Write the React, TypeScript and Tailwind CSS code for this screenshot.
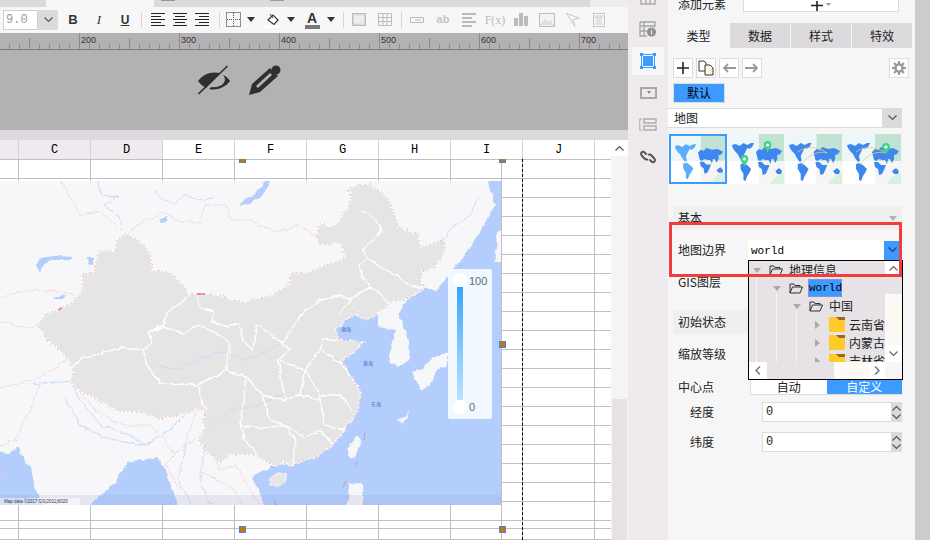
import React from "react";

const CJK = '[font-family:"Noto_Sans_CJK_SC",sans-serif]';
const MONO = '[font-family:"Liberation_Mono",monospace]';

const Caret = () => (
  <svg width="8" height="5" viewBox="0 0 8 5">
    <path d="M0 0H8L4 5Z" fill="#333" />
  </svg>
);

const Chevron = ({ color = "#555", up = false }: { color?: string; up?: boolean }) => (
  <svg width="9" height="6" viewBox="0 0 9 6">
    <path d={up ? "M.5 5.5L4.5 1.5L8.5 5.5" : "M.5 .5L4.5 4.5L8.5 .5"} fill="none" stroke={color} strokeWidth="1.2" />
  </svg>
);

const Sep = ({ className }: { className: string }) => <div className={`w-px h-4 bg-[#d8d8d8] ${className}`} />;

const AlignIcon = ({ kind }: { kind: "left" | "center" | "right" }) => {
  const short = kind === "left" ? "M0 3.5H10M0 9.5H10" : kind === "center" ? "M2 3.5H12M2 9.5H12" : "M4 3.5H14M4 9.5H14";
  return (
    <svg width="14" height="13" viewBox="0 0 14 13">
      <path d={`M0 .5H14M0 6.5H14M0 12.5H14 ${short}`} stroke="#222" strokeWidth="1" fill="none" />
    </svg>
  );
};

const Toolbar = () => (
  <div className="flex items-center h-[26px] bg-[#f7f7f7] pb-[1px]">
    <div className="flex ml-[3px] w-[55px] h-[20px] bg-[#dcdadd]">
      <div className={`w-[35px] bg-white border border-[#cfcfcf] text-[#999] text-[12px] leading-[18px] pl-[2px] ${MONO}`}>9.0</div>
      <div className="flex-1 flex items-center justify-center">
        <Chevron />
      </div>
    </div>
    <div className="ml-[2px] w-[26px] text-center text-[13px] font-bold text-[#333] [font-family:'Liberation_Sans',sans-serif]">B</div>
    <div className="w-[26px] text-center text-[13px] italic text-[#333] [font-family:'Liberation_Serif',serif]">I</div>
    <div className="w-[26px] text-center text-[12px] font-bold underline text-[#333] [font-family:'Liberation_Sans',sans-serif]">U</div>
    <Sep className="ml-[3px]" />
    <div className="ml-[5px] w-[22px] flex justify-center"><AlignIcon kind="left" /></div>
    <div className="w-[22px] flex justify-center"><AlignIcon kind="center" /></div>
    <div className="w-[22px] flex justify-center"><AlignIcon kind="right" /></div>
    <Sep className="ml-[6px]" />
    <div className="ml-[3px] w-[20px] flex justify-center">
      <svg width="15" height="15" viewBox="0 0 15 15">
        <rect x=".5" y=".5" width="14" height="14" fill="none" stroke="#222" strokeDasharray="1 1" />
        <path d="M7.5 1V14M1 7.5H14" stroke="#555" strokeDasharray="1 1" />
      </svg>
    </div>
    <div className="w-[16px] flex justify-center"><Caret /></div>
    <div className="ml-[2px] w-[24px] flex justify-center">
      <svg width="16" height="16" viewBox="0 0 16 16">
        <path d="M3 8L8 3L13 8L9 12.5Z" fill="#fff" stroke="#333" strokeWidth="1.2" />
        <path d="M5 2L8 6" stroke="#333" />
        <rect x="0" y="13" width="16" height="3" fill="#fff" />
      </svg>
    </div>
    <div className="w-[12px] flex justify-center"><Caret /></div>
    <div className="ml-[5px] w-[20px] flex flex-col items-center">
      <span className="text-[14px] leading-[14px] font-bold text-[#333] [font-family:'Liberation_Sans',sans-serif]">A</span>
      <div className="w-[15px] h-[4px] bg-[#777]" />
    </div>
    <div className="w-[18px] flex justify-center"><Caret /></div>
    <Sep className="ml-[3px]" />
    <div className="ml-[4px] w-[22px] flex justify-center">
      <svg width="14" height="13" viewBox="0 0 14 13">
        <rect x=".5" y=".5" width="13" height="12" fill="#d9d9d9" stroke="#bbb" />
        <rect x="2" y="2.5" width="10" height="8" fill="#eee" />
      </svg>
    </div>
    <div className="ml-[4px] w-[22px] flex justify-center">
      <svg width="14" height="13" viewBox="0 0 14 13">
        <path d="M.5 .5H13.5V12.5H.5ZM.5 4.5H13.5M.5 8.5H13.5M5 .5V12.5M9 .5V12.5" fill="none" stroke="#bbb" />
      </svg>
    </div>
    <Sep className="ml-[5px]" />
    <div className="ml-[2px] w-[26px] flex justify-center">
      <svg width="14" height="6" viewBox="0 0 14 6">
        <path d="M.5 .5H13.5V5.5H.5ZM5 3H11" fill="none" stroke="#bbb" />
      </svg>
    </div>
    <div className="w-[26px] text-center text-[11px] font-bold text-[#c4c4c4] [font-family:'Liberation_Sans',sans-serif]">ab</div>
    <div className="w-[26px] flex justify-center">
      <svg width="14" height="14" viewBox="0 0 14 14">
        <path d="M0 1H14M0 5H10M0 9H14M0 13H10" stroke="#bbb" strokeWidth="2" />
      </svg>
    </div>
    <div className="w-[26px] text-center text-[12px] text-[#bbb] [font-family:'Liberation_Serif',serif]">F(x)</div>
    <div className="w-[26px] flex justify-center">
      <svg width="14" height="13" viewBox="0 0 14 13">
        <path d="M0 5H4V13H0ZM5 0H9V13H5ZM10 3H14V13H10Z" fill="#bbb" />
      </svg>
    </div>
    <div className="w-[26px] flex justify-center">
      <svg width="16" height="14" viewBox="0 0 16 14">
        <rect x=".5" y=".5" width="15" height="13" fill="#f3f3f3" stroke="#bbb" />
        <path d="M1 12L6 6L9 9L11 7L15 12Z" fill="#ddd" />
      </svg>
    </div>
    <div className="w-[26px] flex justify-center">
      <svg width="14" height="14" viewBox="0 0 14 14">
        <path d="M.5 .5L13.5 5L7 6.5L9 13.5Z" fill="none" stroke="#c8c8c8" />
      </svg>
    </div>
    <div className="w-[26px] flex justify-center">
      <svg width="12" height="14" viewBox="0 0 12 14">
        <rect x=".5" y=".5" width="11" height="13" fill="#f9f9f9" stroke="#c4c4c4" />
        <path d="M2 3H10M2 5H10M2 11H10" stroke="#c4c4c4" />
        <rect x="3" y="6.5" width="6" height="3" fill="#ddd" />
      </svg>
    </div>
  </div>
);

const Ruler = () => {
  const ticks = Array.from({ length: 63 }, (_, i) => i * 10);
  return (
    <svg className="block" width="628" height="18" viewBox="0 0 628 18">
      <rect width="628" height="18" fill="#b3b1b3" />
      {ticks.map((x) => {
        const major = x % 100 === 80;
        const mid = x % 100 === 30;
        return (
          <path
            key={x}
            d={`M${x - 0.5} ${major ? 0 : mid ? 5 : 11}V16`}
            stroke="#8c8a8c"
          />
        );
      })}
      <path d="M0 16.5H628" stroke="#7d7b7d" strokeWidth="1" />
      {[
        [81, "200"],
        [181, "300"],
        [281, "400"],
        [381, "500"],
        [481, "600"],
        [581, "700"],
      ].map(([x, t]) => (
        <text key={t} x={x} y="10" fontSize="9" fill="#333" fontFamily="Liberation Sans, sans-serif">
          {t}
        </text>
      ))}
    </svg>
  );
};

const EyeOff = () => (
  <svg width="32" height="30" viewBox="0 0 32 30">
    <path d="M0 16C5 9 13 6 22 8L8 23C5 21 2 19 0 16Z" fill="#2f2f2f" />
    <path d="M25 10C28 11 30 13 32 16C28 22 19 26 11 24L13 22C20 23 26 20 27 15C27 13 26 11 25 10Z" fill="#2f2f2f" />
    <path d="M0.5 29L29.5 1" stroke="#2f2f2f" strokeWidth="1.6" />
    <path d="M3 29L31 2" stroke="#b3b1b3" strokeWidth="1" />
  </svg>
);

const Pencil = () => (
  <svg width="32" height="30" viewBox="0 0 32 30">
    <path d="M0 30L3 19L21 3L29 11L11 27Z" fill="#2f2f2f" />
    <path d="M7 21L21 8L23 10L9 23Z" fill="#b3b1b3" />
    <circle cx="27" cy="5" r="4.5" fill="#2f2f2f" />
  </svg>
);

const CHINA =
  "38,325 45,314 57,310 73,302 83,290 81,275 93,272 99,251 115,250 118,239 128,233 137,240 150,252 152,270 170,272 183,285 188,293 212,294 240,302 270,296 290,283 292,272 305,274 320,267 347,257 340,243 320,245 316,236 320,223 332,227 340,220 352,197 348,190 357,185 370,184 387,197 392,207 398,227 418,233 420,247 443,240 445,250 435,268 422,272 420,282 425,287 413,297 392,303 378,313 365,320 358,317 360,312 350,316 335,330 340,340 352,341 364,342 350,355 342,362 350,375 362,393 355,415 345,430 332,445 320,455 293,465 282,463 278,465 263,462 257,455 230,454 220,463 207,453 198,440 203,430 205,410 197,410 160,420 143,413 117,410 93,398 80,392 72,383 73,370 67,358 47,340";

const SEA_EAST =
  "485,170 495,205 483,227 467,253 452,270 435,292 428,288 420,287 407,300 392,303 378,313 365,320 358,317 360,312 350,316 335,330 340,340 352,341 364,342 350,355 342,362 350,375 362,393 355,415 345,430 332,445 320,455 293,465 282,463 278,465 268,468 252,477 258,490 267,515 515,515 515,170";
const SEA_BENGAL = "80,515 115,482 127,463 157,457 167,473 180,515";
const SEA_ARABIAN = "-10,452 10,453 18,447 23,457 30,468 33,483 46,515 -10,515";

const PROVINCES = [
  "190,295 167,313 163,325 148,332 153,343 143,350 120,348 83,358 72,368",
  "197,297 200,307 213,312 213,322 227,327 240,323 242,340 253,350",
  "148,332 163,327 183,333 197,325 217,333 230,343 230,358",
  "253,350 257,325 283,343 300,315 320,300 340,296 350,300",
  "363,210 375,220 382,230 363,250 368,258 358,265 363,277 370,287 350,300 340,313",
  "368,258 382,268 400,277 408,285 422,287",
  "370,287 383,295 388,307",
  "143,350 147,365 160,383 197,385 203,403 207,410",
  "197,385 213,377 227,370 247,377 262,395 285,400 300,395 320,400",
  "227,350 227,370",
  "247,377 243,405 240,425 263,428 285,425 295,440 293,465",
  "240,425 245,440 257,455",
  "262,395 270,420 285,425 305,438 320,430 332,445",
  "285,400 278,360 290,350 283,343",
  "278,360 305,370 320,350 323,340 340,340",
  "305,370 320,395 340,395 352,410",
  "320,350 340,362 350,375",
  "320,400 325,425 345,430",
  "320,395 320,400",
  "300,395 305,370",
];

const RIVERS = [
  "92,170 102,195 118,197 104,205 118,215 122,225",
  "155,191 160,198 175,205 183,195 198,200 215,198",
  "480,195 470,215 450,230 440,245",
  "33,385 70,380 80,400 100,425 130,435 145,445 170,430 185,415",
  "65,398 80,425 110,440 145,445",
  "198,515 178,480 186,445 195,440",
  "215,515 200,480 205,445",
  "153,365 180,370 200,358 225,352 245,360 280,345",
  "215,425 230,410 260,405 280,395",
];

const WEST_BORDERS = [
  "55,170 80,215 100,212 115,225 122,232",
  "128,233 145,220 165,212 180,222 200,222 205,205 225,205 232,220 250,220 275,232 300,225 316,236",
  "-10,300 30,290 60,292 78,295 83,290",
  "-10,320 30,328 38,325",
  "-10,390 35,380 60,365 67,358",
  "5,480 -10,450 15,440 30,410 40,385",
  "80,392 95,410 120,425 150,425 165,440 175,455",
  "197,410 185,445 165,465 180,490",
  "205,440 220,470 235,465 266,515",
  "200,470 235,490 245,515",
];

const MapCanvas = () => (
  <svg className="absolute left-0 top-[41px]" width="501" height="324" viewBox="0 181 501 324">
    <defs>
      <filter id="rough" x="-5%" y="-5%" width="110%" height="110%">
        <feTurbulence type="fractalNoise" baseFrequency="0.14" numOctaves="2" seed="4" />
        <feDisplacementMap in="SourceGraphic" scale="5" xChannelSelector="R" yChannelSelector="G" />
      </filter>
    </defs>
    <rect x="0" y="181" width="501" height="324" fill="#f7f6f8" />
    <g filter="url(#rough)">
      <polygon points={SEA_EAST} fill="#b3cefd" />
      <polygon points={SEA_BENGAL} fill="#b3cefd" />
      <polygon points={SEA_ARABIAN} fill="#b3cefd" />
      <polygon points="378,313 392,303 407,300 398,313 404,327 410,345 409,360 398,368 390,362 388,357 395,330 378,327" fill="#f7f6f8" />
      <polygon points="420,370 432,358 448,352 448,366 437,370 430,385 420,390 412,372" fill="#f7f6f8" />
      <polygon points="497,233 510,225 510,262 494,262 496,248" fill="#f7f6f8" />
      <polygon points="347,447 358,435 361,440 355,458 350,460" fill="#f7f6f8" />
      <polygon points="349,484 362,483 363,515 347,515" fill="#f7f6f8" />
      <polygon points="270,478 278,473 287,473 285,482 277,487 270,485" fill="#e6e6e6" stroke="#f7f6f8" />
      <polygon points="398,420 410,412 402,424" fill="#f7f6f8" />
      <polygon points="240,203 252,196 262,186 275,170 265,192 250,204 241,206" fill="#b3cefd" />
      <polygon points="36,266 40,258 55,256 73,257 70,260 52,260 42,266 40,274" fill="#b3cefd" />
      <polygon points="87,258 93,258 93,265 88,263" fill="#b3cefd" />
      <polygon points="53,297 66,295 62,299 55,299" fill="#b3cefd" />
      <polygon points="160,218 166,216 168,222 162,223" fill="#b3cefd" />
      {WEST_BORDERS.map((p) => (
        <polyline key={p} points={p} fill="none" stroke="#f0c4c8" strokeWidth="0.8" strokeDasharray="2 1" />
      ))}
      <polygon points={CHINA} fill="#e5e5e5" />
      <polygon points={CHINA} fill="none" stroke="#fff" strokeWidth="1.4" />
      <polygon points={CHINA} fill="none" stroke="#e59ba0" strokeWidth="0.7" strokeDasharray="2 2" />
      {RIVERS.map((p) => (
        <polyline key={p} points={p} fill="none" stroke="#c4d8fb" strokeWidth="0.9" />
      ))}
      {PROVINCES.map((p) => (
        <polyline key={p} points={p} fill="none" stroke="#fff" strokeWidth="1.4" />
      ))}
    </g>
    <path d="M364 440L365 432M355 466L358 461M343 487L346 481M276 505L274 500" stroke="#e0535c" strokeWidth="0.8" strokeDasharray="1 1" />
    <path d="M197 294H205M58 310L62 308" stroke="#d94a52" strokeWidth="1" />
    <rect x="0" y="495" width="501" height="10" fill="#8f97c8" opacity="0.16" />
    <rect x="0" y="498" width="80" height="7" fill="#fff" opacity="0.5" />
    <text x="4" y="503" fontSize="4.5" fill="#333" fontFamily="Liberation Sans, sans-serif">Map data ©2017 GS(2011)6020</text>
    <text x="363" y="365" fontSize="5" fill="#3a66b8" fontFamily="Noto Sans CJK SC, sans-serif">黄海</text>
    <text x="371" y="406" fontSize="5" fill="#3a66b8" fontFamily="Noto Sans CJK SC, sans-serif">东海</text>
    <text x="341" y="331" fontSize="5" fill="#3a66b8" fontFamily="Noto Sans CJK SC, sans-serif">渤海</text>
  </svg>
);

const Legend = () => (
  <div className="absolute left-[448px] top-[129px] w-[44px] h-[150px] bg-[#f6faff]/95 rounded-[2px]">
    <div className="absolute left-[9px] top-[18px] w-[6px] h-[113px] bg-gradient-to-b from-[#2ea6ff] to-[#b9e3ff]" />
    <div className="absolute left-[5px] top-[4px] w-[14px] h-[14px] rounded-full bg-white" />
    <div className="absolute left-[5px] top-[131px] w-[14px] h-[14px] rounded-full bg-white" />
    <span className="absolute left-[21px] top-[4px] text-[11px] leading-[16px] text-[#5b6b80] [font-family:'Liberation_Sans',sans-serif]">100</span>
    <span className="absolute left-[21px] top-[130px] text-[11px] leading-[16px] text-[#5b6b80] [font-family:'Liberation_Sans',sans-serif]">0</span>
  </div>
);

const Handle = ({ className }: { className: string }) => (
  <div className={`absolute w-[7px] bg-[#c8760a] border border-[#3b86e6] ${className}`} />
);

const COLS = ["", "C", "D", "E", "F", "G", "H", "I", "J", ""];
const ROW_HEIGHTS = [
  ...Array.from({ length: 19 }, () => "h-[19px]"),
  "h-[8px]",
  "h-[11px]",
];

const Sheet = () => (
  <div className="relative w-[611px] h-[400px] overflow-hidden bg-white">
    <div className="grid grid-cols-[19px_repeat(8,72px)_16px] h-[20px] border-b border-[#c0c0c0]">
      {COLS.map((c, i) => (
        <div
          key={i}
          className={`flex items-center justify-center text-[12px] text-black border-[#d4d2d4] ${MONO} ${
            i < 3 ? "bg-[#efeaef]" : "bg-white"
          } ${i < 9 ? "border-r" : ""}`}
        >
          {c}
        </div>
      ))}
    </div>
    {ROW_HEIGHTS.map((h, r) => (
      <div key={r} className={`grid grid-cols-[19px_repeat(8,72px)_16px] border-b border-[#c0c0c0] ${h}`}>
        {COLS.map((_, i) => (
          <div key={i} className={i < 9 ? "border-r border-[#c0c0c0]" : ""} />
        ))}
      </div>
    ))}
    <MapCanvas />
    <Legend />
    <div className="absolute left-[501px] top-[19px] w-px h-[381px] bg-[#c0c0c0]" />
    <div className="absolute left-[522px] top-[19px] h-[381px] border-l border-dashed border-black" />
    <Handle className="left-[239px] top-[19px] h-[4px] border-t-0" />
    <Handle className="left-[499px] top-[19px] h-[4px] border-t-0" />
    <Handle className="left-[499px] top-[201px] h-[7px]" />
    <Handle className="left-[239px] top-[386px] h-[7px]" />
    <Handle className="left-[499px] top-[386px] h-[7px]" />
  </div>
);

const SheetScrollbar = () => (
  <div className="w-[17px] h-[400px] bg-[#f4f4f4] flex flex-col">
    <div className="h-[16px] bg-white flex items-center justify-center">
      <Chevron up />
    </div>
    <div className="h-[243px]" />
    <div className="flex-1 ml-px mr-px bg-[#e6e2e6]" />
  </div>
);

const Sidebar = () => (
  <div className="w-[40px] h-[540px] bg-[#eeeaee] flex flex-col items-center">
    <div className="h-[6px] w-full flex justify-center overflow-hidden">
      <svg width="16" height="6" viewBox="0 0 16 6">
        <path d="M1 0V4H15V0M6 0V4M10 0V4" fill="none" stroke="#aaa" strokeWidth="1.4" />
      </svg>
    </div>
    <div className="mt-[10px] h-[25px] flex items-center">
      <svg width="18" height="16" viewBox="0 0 18 16">
        <path d="M1 1H16V6M1 1V15H8M1 5H16M5 1V15M1 10H8" fill="none" stroke="#a5a5a5" strokeWidth="1.3" />
        <circle cx="12.5" cy="11" r="4.5" fill="#8f8f8f" />
        <path d="M12.5 9.5V13.5M12.5 7.5V8.5" stroke="#eee" strokeWidth="1.2" />
      </svg>
    </div>
    <div className="mt-[6px] w-[32px] h-[28px] bg-[#f7f7f7] flex items-center justify-center">
      <svg width="16" height="16" viewBox="0 0 16 16">
        <rect x="1.5" y="1.5" width="13" height="13" fill="#f7f7f7" stroke="#3d9bff" strokeWidth="1" />
        <rect x="3" y="3" width="10" height="10" fill="#3d9bff" />
        <path d="M0 0H3V3H0ZM13 0H16V3H13ZM0 13H3V16H0ZM13 13H16V16H13Z" fill="#3d9bff" />
      </svg>
    </div>
    <div className="mt-[10px] h-[16px] flex items-center">
      <svg width="17" height="12" viewBox="0 0 17 12">
        <rect x="1" y="1" width="15" height="10" fill="none" stroke="#a8a8a8" strokeWidth="2" />
        <path d="M7 4H11L9 7Z" fill="#888" />
      </svg>
    </div>
    <div className="mt-[15px] h-[16px] flex items-center">
      <svg width="18" height="13" viewBox="0 0 18 13">
        <path d="M3 1H0.8V12H3" fill="none" stroke="#aaa" />
        <rect x="5" y="1" width="12" height="4" fill="none" stroke="#aaa" strokeWidth="1.4" />
        <rect x="5" y="8" width="12" height="4" fill="none" stroke="#aaa" strokeWidth="1.4" />
      </svg>
    </div>
    <div className="mt-[16px] h-[18px] flex items-center">
      <svg width="16" height="16" viewBox="0 0 16 16">
        <path d="M6.5 5.5L4.5 3.5C3 2 1 3 1 5C1 6 2 7 4 9C5.5 10.5 7 11 8 10M9.5 10.5L11.5 12.5C13 14 15 13 15 11C15 10 14 9 12 7C10.5 5.5 9 5 8 6" fill="none" stroke="#555" strokeWidth="2" />
      </svg>
    </div>
  </div>
);

const ToolBtn = ({ children }: { children: React.ReactNode }) => (
  <div className="w-[20px] h-[20px] bg-white border border-[#dcdcdc] flex items-center justify-center">{children}</div>
);

const Pin = ({ x, y }: { x: number; y: number }) => (
  <g transform={`translate(${x} ${y})`}>
    <path d="M-4 0a4 4 0 1 1 8 0c0 3-3 4-4 8c-1-4-4-5-4-8Z" fill="#3fd28a" />
    <circle r="1.6" fill="#fff" />
  </g>
);

const WorldMap = ({ variant }: { variant: 0 | 1 | 2 | 3 }) => (
  <svg width="100%" height="100%" viewBox="0 0 58 50" preserveAspectRatio="none" className="block">
    <rect width="58" height="50" fill="#fff" />
    <rect width="32" height="27" fill="#edf7f7" />
    <rect x="32" width="26" height="27" fill="#c2e3d3" />
    <rect x="32" y="27" width="26" height="23" fill="#f5f5f5" />
    <path d="M44 50C47 44 52 40 58 39V50Z" fill="#d8f0dd" />
    <path
      d="M4 11L8 10L12 12L16 9L20 11L24 9L27 9L25 13L22 15L20 14L18 18L16 22L17 27L15 28L12 24L10 20L7 17L5 14ZM13 30L17 29L21 32L24 35L22 39L20 42L18 47L16 46L16 40L13 35Z"
      fill={variant === 0 ? "#5aaefa" : "#3d87ee"}
    />
    <path
      d="M29 18L32 15L35 16L38 13L44 15L50 14L56 17L54 20L51 21L51 25L49 29L47 25L45 25L44 30L42 26L39 26L36 25L33 27L31 26L30 22ZM31 28L35 28L38 31L43 31L41 36L39 40L36 41L35 35L32 33ZM49 37L53 34L56 37L55 40L51 40Z"
      fill="#3d87ee"
    />
    {variant >= 2 && (
      <path d="M13 18C22 11 34 13 43 19M17 31C22 22 33 16 43 19" fill="none" stroke="#f2c879" strokeWidth="0.8" />
    )}
    {variant === 1 && (
      <>
        <Pin x={41} y={11} />
        <Pin x={17} y={25} />
      </>
    )}
    {variant === 3 && <Pin x={43} y={13} />}
  </svg>
);

const SectionBar = ({ label, className, arrow = false }: { label: string; className: string; arrow?: boolean }) => (
  <div className={`h-[24px] bg-[#efefef] flex items-center justify-between pl-[5px] pr-[5px] text-[12px] text-[#222] ${className}`}>
    <span>{label}</span>
    {arrow && (
      <svg width="8" height="5" viewBox="0 0 8 5">
        <path d="M0 0H8L4 5Z" fill="#b0b0b0" />
      </svg>
    )}
  </div>
);

const NumberField = ({ label, className }: { label: string; className: string }) => (
  <div className={`flex items-center h-[20px] ${className}`}>
    <span className="w-[94px] pl-[22px] text-[12px] text-[#222]">{label}</span>
    <div className="flex w-[140px] h-[20px] border border-[#dcdcdc] bg-white">
      <span className={`flex-1 pl-[3px] text-[12px] leading-[18px] text-[#222] ${MONO}`}>0</span>
      <div className="w-[10px] bg-[#dcdadd] flex flex-col items-center justify-around">
        <Chevron up />
        <Chevron />
      </div>
    </div>
  </div>
);

const TREE = [
  { level: "pl-0", label: "地理信息", open: true },
  { level: "pl-[20px]", label: "world", open: true, active: true },
  { level: "pl-[40px]", label: "中国", open: true },
  { level: "pl-[60px]", label: "云南省" },
  { level: "pl-[60px]", label: "内蒙古" },
  { level: "pl-[60px]", label: "吉林省" },
];

const TreeRow = ({ row }: { row: (typeof TREE)[number] }) => (
  <div className={`relative flex items-center h-[18.2px] shrink-0 ${row.level}`}>
    <div className="w-[16px] flex justify-center">
      <svg width="8" height="8" viewBox="0 0 8 8">
        <path d={row.open ? "M0 2H8L4 7Z" : "M2 0V8L7 4Z"} fill="#aaa" />
      </svg>
    </div>
    {row.open ? (
      <svg className="ml-[4px]" width="14" height="12" viewBox="0 0 14 12">
        <path d="M1 11V2H5L6 3.5H11V5M1 11H11L13.5 5H3.5L1 11Z" fill="none" stroke="#333" strokeWidth="1" />
      </svg>
    ) : (
      <svg className="ml-[4px]" width="16" height="15" viewBox="0 0 16 15">
        <rect width="16" height="15" rx="1" fill="#ffca2c" />
        <path d="M7 0H16V3H10Z" fill="#9b6a1e" />
      </svg>
    )}
    {row.active ? (
      <span className={`ml-[5px] w-[34px] h-[18px] leading-[16px] bg-[#3d9bff] border border-[#8f8fd8] text-center text-[11px] text-black ${MONO}`}>
        {row.label}
      </span>
    ) : (
      <span className={`${row.open ? "ml-[6px]" : "ml-[4px]"} text-[12px] leading-[14px] text-[#222] whitespace-nowrap`}>{row.label}</span>
    )}
  </div>
);

const TreeDropdown = () => (
  <div className="absolute left-[80px] top-[260px] w-[155px] h-[120px] border border-black bg-[#f6f6f6] flex flex-col">
    <div className="flex h-[101px]">
      <div className="relative w-[136px] bg-[#e6e2e6] overflow-hidden flex flex-col">
        <div className="absolute left-[7px] top-[14px] w-px h-[90px] bg-[#f6f4f6]" />
        <div className="absolute left-[27px] top-[32px] w-px h-[70px] bg-[#f6f4f6]" />
        <div className="absolute left-[47px] top-[50px] w-px h-[52px] bg-[#f6f4f6]" />
        {TREE.map((r) => (
          <TreeRow key={r.label} row={r} />
        ))}
      </div>
      <div className="flex-1 flex flex-col">
        <div className="h-[14px] bg-white flex items-center justify-center"><Chevron color="#666" up /></div>
        <div className="h-[19px] bg-[#e6e2e6]" />
        <div className="h-[51px] bg-[#fdf9f4]" />
        <div className="flex-1 bg-white flex items-center justify-center"><Chevron color="#666" /></div>
      </div>
    </div>
    <div className="flex flex-1">
      <div className="w-[18px] bg-white flex items-center justify-center">
        <svg width="6" height="9" viewBox="0 0 6 9"><path d="M5 .5L1 4.5L5 8.5" fill="none" stroke="#777" strokeWidth="1.5" /></svg>
      </div>
      <div className="w-[67px] bg-[#e6e2e6]" />
      <div className="w-[35px] bg-[#fdf9f4]" />
      <div className="w-[16px] bg-white flex items-center justify-center">
        <svg width="6" height="9" viewBox="0 0 6 9"><path d="M1 .5L5 4.5L1 8.5" fill="none" stroke="#777" strokeWidth="1.5" /></svg>
      </div>
    </div>
  </div>
);

const Panel = () => (
  <div className="relative w-[247px] h-[540px] bg-[#f6f6f6] overflow-hidden">
    <div className="flex items-end h-[12px] overflow-hidden">
      <span className="ml-[10px] text-[12px] leading-[16px] text-[#222] whitespace-nowrap">添加元素</span>
      <div className="ml-[17px] w-[156px] h-[13px] bg-white border border-[#dcdcdc] flex items-end justify-center shrink-0">
        <svg width="22" height="10" viewBox="0 0 22 10">
          <path d="M7 0V10M1 4.5H13" stroke="#222" strokeWidth="1.6" />
          <path d="M16 2H21L18.5 5Z" fill="#999" />
        </svg>
      </div>
    </div>
    <div className="mt-[11px] flex h-[25px] text-[12px] text-[#222] w-[244px] gap-[1px]">
      <div className="w-[61px] flex items-center justify-center">类型</div>
      <div className="w-[60px] flex items-center justify-center bg-[#dcdadd]">数据</div>
      <div className="w-[60px] flex items-center justify-center bg-[#dcdadd]">样式</div>
      <div className="w-[60px] flex items-center justify-center bg-[#dcdadd]">特效</div>
    </div>
    <div className="mt-[10px] pl-[5px] pr-[6px] flex gap-[3px]">
      <ToolBtn>
        <svg width="12" height="12" viewBox="0 0 12 12"><path d="M6 0V12M0 6H12" stroke="#222" strokeWidth="1.6" /></svg>
      </ToolBtn>
      <ToolBtn>
        <svg width="16" height="16" viewBox="0 0 16 16">
          <path d="M1 1H6L8 3V11H1Z" fill="#fff" stroke="#333" />
          <path d="M7 5H12L15 8V15H7Z" fill="#fff4dc" stroke="#333" />
        </svg>
      </ToolBtn>
      <ToolBtn>
        <svg width="14" height="10" viewBox="0 0 14 10"><path d="M14 5H2M6 1L2 5L6 9" fill="none" stroke="#999" strokeWidth="1.8" /></svg>
      </ToolBtn>
      <ToolBtn>
        <svg width="14" height="10" viewBox="0 0 14 10"><path d="M0 5H12M8 1L12 5L8 9" fill="none" stroke="#999" strokeWidth="1.8" /></svg>
      </ToolBtn>
      <div className="ml-auto">
        <ToolBtn>
          <svg width="14" height="14" viewBox="0 0 14 14">
            <circle cx="7" cy="7" r="3.6" fill="none" stroke="#999" strokeWidth="2.4" />
            <path d="M7 0V3M7 11V14M0 7H3M11 7H14M2 2L4 4M10 10L12 12M12 2L10 4M4 10L2 12" stroke="#999" strokeWidth="2.2" />
          </svg>
        </ToolBtn>
      </div>
    </div>
    <div className="mt-[5px] ml-[5px] w-[52px] h-[20px] bg-[#3d9bff] border border-[#dcdcdc] flex items-center justify-center text-[12px] text-black">默认</div>
    <div className="mt-[5px] w-[234px] h-[20px] flex bg-white border-y border-[#dcdcdc]">
      <span className="flex-1 pl-[6px] text-[12px] leading-[18px] text-[#222]">地图</span>
      <div className="w-[20px] bg-[#dcdadd] flex items-center justify-center"><Chevron /></div>
    </div>
    <div className="mt-[6px] ml-[1px] flex h-[50px]">
      <div className="border-2 border-[#3d9bff] w-[58px] overflow-hidden"><WorldMap variant={0} /></div>
      <div className="ml-[1px] w-[56px] overflow-hidden"><WorldMap variant={1} /></div>
      <div className="ml-[1px] w-[57px] overflow-hidden"><WorldMap variant={2} /></div>
      <div className="ml-[1px] w-[58px] overflow-hidden"><WorldMap variant={3} /></div>
    </div>
    <SectionBar label="基本" arrow className="mt-[22px] ml-[5px] w-[229px]" />
    <div className="mt-[10px] flex items-center h-[20px] pl-[10px] text-[12px] text-[#222]">
      <span className="w-[70px]">地图边界</span>
      <div className="w-[136px] h-[20px] bg-white pl-[3px] text-[11px] leading-[18px] text-black">
        <span className={MONO}>world</span>
      </div>
      <div className="w-[16px] h-[19px] bg-[#3d9bff] flex items-center justify-center"><Chevron color="#1c3e73" /></div>
    </div>
    <div className="mt-[12px] pl-[10px] h-[20px] text-[12px] leading-[20px] text-[#222]">GIS图层</div>
    <SectionBar label="初始状态" className="mt-[18px] ml-[5px] w-[229px]" />
    <div className="mt-[10px] pl-[10px] h-[20px] text-[12px] leading-[20px] text-[#222]">缩放等级</div>
    <div className="mt-[15px] flex items-center h-[16px] pl-[10px] text-[12px] text-[#222]">
      <span className="w-[72px]">中心点</span>
      <div className="flex w-[152px] h-[16px] leading-[16px] text-center border-l border-b border-[#dcdcdc]">
        <span className="w-[76px] bg-white">自动</span>
        <span className="w-[76px] bg-[#3d9bff] text-white">自定义</span>
      </div>
    </div>
    <NumberField label="经度" className="mt-[7px]" />
    <NumberField label="纬度" className="mt-[10px]" />
    <TreeDropdown />
    <div className="absolute left-[1px] top-[222px] w-[233px] h-[55px] border-[3px] border-[#f33c3c]" />
  </div>
);

const App = () => {
  return (
    <div className={`flex w-[931px] h-[540px] overflow-hidden bg-white ${CJK}`}>
      <div className="w-[628px] flex flex-col">
        <div className="flex h-[7px]">
          <div className="w-[46px] bg-[#dcdadd]" />
          <div className="w-[108px] bg-[#f7f7f7]" />
          <div className="w-[436px] bg-[#dcdadd] flex">
            <div className="ml-[7px] w-[14px] h-px bg-[#999]" />
            <div className="ml-[95px] w-[14px] h-px bg-[#999]" />
          </div>
          <div className="flex-1 bg-[#efebef]" />
        </div>
        <Toolbar />
        <Ruler />
        <div className="h-[79px] bg-[#b3b1b3] flex items-start pt-[14px] pl-[198px] gap-[19px]">
          <EyeOff />
          <Pencil />
        </div>
        <div className="h-[10px] bg-[#dcdadd]" />
        <div className="flex">
          <Sheet />
          <SheetScrollbar />
        </div>
      </div>
      <Sidebar />
      <Panel />
      <div className="w-[15px] bg-[#cccccc]" />
    </div>
  );
};

export default App;
